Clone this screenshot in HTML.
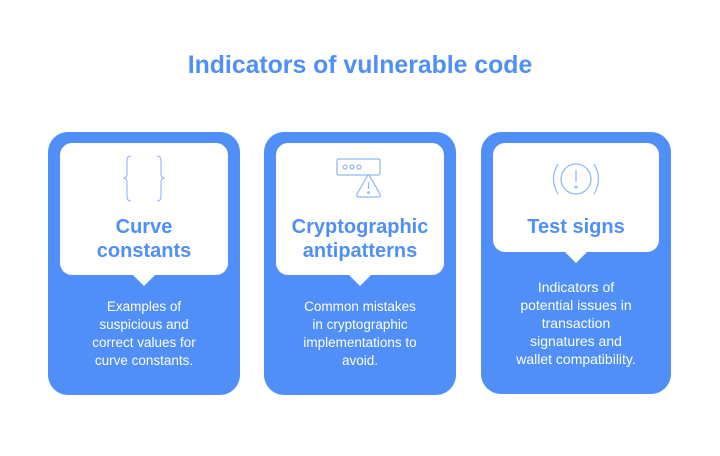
<!DOCTYPE html>
<html><head><style>
body{margin:0;width:720px;height:456px;background:#fff;font-family:"Liberation Sans",sans-serif;position:relative;overflow:hidden}
h1{position:absolute;top:52px;left:0;width:720px;text-align:center;margin:0;font-size:24.8px;font-weight:bold;color:#4f8ff7}
.card{position:absolute;top:132px;width:192px;height:263px;background:#4f8ff7;border-radius:20px}
.box{position:absolute;left:12px;right:12px;top:11px;background:#fff;border-radius:12px}
.box:after{content:"";position:absolute;left:50%;bottom:-11px;margin-left:-11px;border-left:11px solid transparent;border-right:11px solid transparent;border-top:11px solid #fff}
.t{position:absolute;left:0;right:0;text-align:center;font-weight:bold;font-size:20px;line-height:24px;color:#4f8ff7}
.d{position:absolute;text-align:center;color:#fff;font-size:13.5px;line-height:18px;white-space:nowrap}
svg{position:absolute;left:50%;transform:translateX(-50%)}
</style></head><body>
<h1>Indicators of vulnerable code</h1>

<div class="card" style="left:48px">
 <div class="box" style="height:132px">
  <svg style="top:12px" width="44" height="48" viewBox="0 0 44 48" fill="none" stroke="#8fb6f5" stroke-width="1.1">
   <path d="M9 1 Q5 1 5 5 V19 Q5 23 1 23 Q5 23 5 27 V42 Q5 46 9 46"/>
   <path d="M35 1 Q39 1 39 5 V19 Q39 23 43 23 Q39 23 39 27 V42 Q39 46 35 46"/>
  </svg>
  <div class="t" style="top:72px">Curve<br>constants</div>
 </div>
 <div class="d" style="top:166px;left:0;right:0">Examples of<br>suspicious and<br>correct values for<br>curve constants.</div>
</div>

<div class="card" style="left:264px">
 <div class="box" style="height:132px">
  <svg style="top:15px" width="48" height="42" viewBox="0 0 48 42" fill="none" stroke="#8fb6f5" stroke-width="1.2">
   <rect x="1" y="1" width="43" height="16" rx="1.5"/>
   <circle cx="9" cy="9" r="2"/><circle cx="16" cy="9" r="2"/><circle cx="23" cy="9" r="2"/>
   <path d="M32 17 L21 36 Q20 39 23 39 L42 39 Q45 39 44 36 L33 17 Z" fill="#fff"/>
   <path d="M32.5 24 V31"/><circle cx="32.5" cy="34.5" r="0.8" fill="#8fb6f5"/>
  </svg>
  <div class="t" style="top:72px">Cryptographic<br>antipatterns</div>
 </div>
 <div class="d" style="top:166px;left:0;right:0">Common mistakes<br>in cryptographic<br>implementations to<br>avoid.</div>
</div>

<div class="card" style="left:481px;width:190px;height:262px">
 <div class="box" style="height:109px">
  <svg style="top:17px" width="50" height="38" viewBox="0 0 50 38" fill="none" stroke="#8fb6f5" stroke-width="1.2">
   <circle cx="25" cy="19" r="15"/>
   <path d="M7 4 Q-2 19 7 34"/><path d="M43 4 Q52 19 43 34"/>
   <path d="M25 10 V22"/><circle cx="25" cy="27" r="0.9" fill="#8fb6f5"/>
  </svg>
  <div class="t" style="top:72px">Test signs</div>
 </div>
 <div class="d" style="top:146px;left:0;right:0;font-size:14px">Indicators of<br>potential issues in<br>transaction<br>signatures and<br>wallet compatibility.</div>
</div>
</body></html>
